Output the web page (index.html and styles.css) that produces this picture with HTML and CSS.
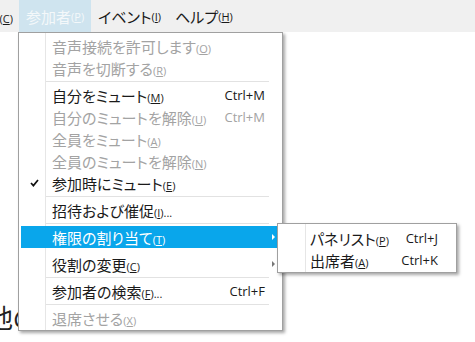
FILE: index.html
```html
<!DOCTYPE html>
<html>
  <head>
    <title>参加者メニュー</title>
    <link rel="stylesheet" href="styles.css">
  </head>
  <body>
    <div class="menubar">
      <span class="mb-cut"><span>会議<span class="mn">(<u>C</u>)</span></span></span>
      <span class="mb-item active">参加者<span class="mn">(<u>P</u>)</span></span>
      <span class="mb-item">イベント<span class="mn">(<u>I</u>)</span></span>
      <span class="mb-item">ヘルプ<span class="mn">(<u>H</u>)</span></span>
    </div>

    <div class="page">
      <p class="doc-text">他の</p>

      <div class="menu">
        <div class="item disabled"><span class="check"></span><span class="label">音声接続を許可します<span class="mn">(<u>O</u>)</span></span></div>
        <div class="item disabled"><span class="check"></span><span class="label">音声を切断する<span class="mn">(<u>R</u>)</span></span></div>
        <div class="sep"></div>
        <div class="item"><span class="check"></span><span class="label">自分をミュート<span class="mn">(<u>M</u>)</span></span><span class="key">Ctrl+M</span><span class="arrow-slot"></span></div>
        <div class="item disabled"><span class="check"></span><span class="label">自分のミュートを解除<span class="mn">(<u>U</u>)</span></span><span class="key">Ctrl+M</span><span class="arrow-slot"></span></div>
        <div class="item disabled"><span class="check"></span><span class="label">全員をミュート<span class="mn">(<u>A</u>)</span></span></div>
        <div class="item disabled"><span class="check"></span><span class="label">全員のミュートを解除<span class="mn">(<u>N</u>)</span></span></div>
        <div class="item">
          <span class="check">
            <svg width="9" height="8" viewBox="0 0 9 8"><path d="M1 4 L3.4 6.6 L8 1" fill="none" stroke="#111" stroke-width="1.7"/></svg>
          </span>
          <span class="label">参加時にミュート<span class="mn">(<u>E</u>)</span></span>
        </div>
        <div class="sep"></div>
        <div class="item"><span class="check"></span><span class="label">招待および催促<span class="mn">(<u>I</u>)...</span></span></div>
        <div class="sep"></div>
        <div class="item hot"><span class="check"></span><span class="label">権限の割り当て<span class="mn">(<u>T</u>)</span></span><span class="key"></span><span class="arrow-slot"><span class="arrow"></span></span></div>
        <div class="sep blank"></div>
        <div class="item"><span class="check"></span><span class="label">役割の変更<span class="mn">(<u>C</u>)</span></span><span class="key"></span><span class="arrow-slot"><span class="arrow grey"></span></span></div>
        <div class="sep"></div>
        <div class="item"><span class="check"></span><span class="label">参加者の検索<span class="mn">(<u>F</u>)...</span></span><span class="key">Ctrl+F</span><span class="arrow-slot"></span></div>
        <div class="sep"></div>
        <div class="item disabled"><span class="check"></span><span class="label">退席させる<span class="mn">(<u>X</u>)</span></span></div>
      </div>

      <div class="submenu">
        <div class="item"><span class="label">パネリスト<span class="mn">(<u>P</u>)</span></span><span class="key">Ctrl+J</span></div>
        <div class="item"><span class="label">出席者<span class="mn">(<u>A</u>)</span></span><span class="key">Ctrl+K</span></div>
      </div>
    </div>
  </body>
</html>
```

FILE: styles.css
```css
body {
  margin: 0;
  background: #fff;
  font-family: "Noto Sans CJK JP", sans-serif;
  font-feature-settings: "palt";
  color: #1a1a1a;
}

.menubar {
  display: flex;
  height: 32px;
  background: #f0f0f0;
  font-size: 15px;
}

.mb-cut {
  width: 13px;
  overflow: hidden;
  display: flex;
  justify-content: flex-end;
  align-items: center;
  white-space: nowrap;
  margin-right: 6px;
}

.mb-item {
  display: flex;
  align-items: center;
  padding: 0 7px;
  white-space: nowrap;
}

.mb-item.active {
  background: #cfe4ef;
  color: #f4f8fa;
}

.mn {
  font-family: "Open Sans", sans-serif;
  font-size: 11px;
}

.page {
  position: relative;
  height: 310px;
  overflow: hidden;
}

.doc-text {
  margin: 272px 0 0 -13px;
  font-size: 26px;
  line-height: 26px;
  color: #222;
  white-space: nowrap;
}

.menu,
.submenu {
  position: absolute;
  background: #fff;
  border: 1px solid #a0a0a0;
  box-shadow: 2px 2px 3px rgba(0, 0, 0, 0.35);
  font-size: 15px;
}

.menu {
  top: 0;
  left: 18px;
  width: 263px;
  padding: 2px 0 1px;
  background-image: linear-gradient(to right, transparent 26px, #e6e6e6 26px, #e6e6e6 27px, transparent 27px);
}

.submenu {
  top: 191px;
  left: 277px;
  width: 178px;
  padding: 3px 0 1px;
  background-image: linear-gradient(to right, transparent 27px, #e6e6e6 27px, #e6e6e6 28px, transparent 28px);
}

.item {
  display: flex;
  align-items: center;
  height: 22px;
  white-space: nowrap;
}

.menu .item {
  margin: 0 4px 0 2px;
  padding: 0 3px 0 9px;
}

.submenu .item {
  padding: 0 18px 0 32px;
}

.item.disabled {
  color: #a3a3a3;
}

.item.hot {
  background: #09a6eb;
  color: #fff;
}

.check {
  width: 22px;
  display: flex;
  align-items: center;
}

.key {
  margin-left: auto;
  font-family: "Open Sans", sans-serif;
  font-size: 13px;
}

.arrow-slot {
  width: 10px;
  display: flex;
  justify-content: flex-end;
}

.arrow {
  width: 0;
  height: 0;
  border-left: 3px solid #fff;
  border-top: 3px solid transparent;
  border-bottom: 3px solid transparent;
}

.arrow.grey {
  border-left-color: #777;
}

.sep {
  height: 1px;
  margin: 2px 13px 2px 27px;
  background: #e2e2e2;
}

.sep.blank {
  background: transparent;
}
```
